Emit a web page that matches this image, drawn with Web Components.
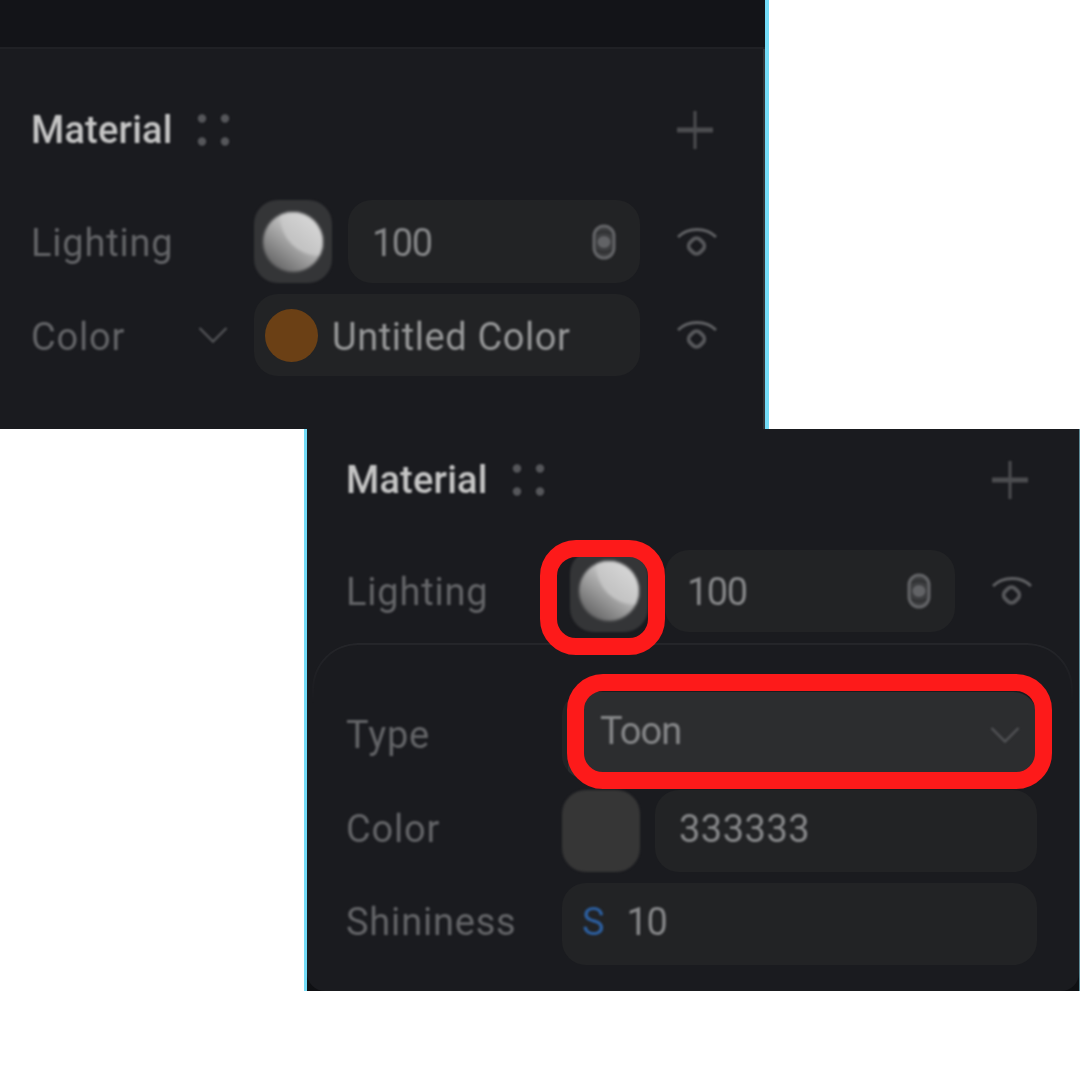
<!DOCTYPE html>
<html>
<head>
<meta charset="utf-8">
<title>Material panel</title>
<style>
   html, body { margin: 0; background: #fff; }
   body { width: 1080px; height: 1080px; overflow: hidden; font-family: Roboto, "Liberation Sans", sans-serif; }
   .first { --label-w: 222px; --control-w: 386px; --gap: 16px; --nudge: 3px; }
   .second { --label-w: 223px; --control-w: 385px; --gap: 17px; --nudge: 2px; --pad: 22px; }
   .sub { --label-w: 215px; --control-w: 475px; --gap: 15px; --nudge: 0px; --pad: 24px; }
   .swatch-flat { width: 78px; height: 82px; border-radius: 24px; background: #363636; flex: none; filter: blur(.8px); }
   .dot-color { display: block; width: 53px; height: 53px; border-radius: 50%; background: #6b4015; margin: 0 14px 0 -1px; filter: blur(.7px); }
</style>
</head>
<body>

<ui-panel class="first" side="right" band>
   <material-section>
      <prop-row label="Lighting" style="--field-h:83px">
         <sphere-swatch></sphere-swatch>
         <value-field grow value="100" style="--ls:-1.500px"><ui-icon slot="end" name="link"></ui-icon></value-field>
         <ui-icon slot="end" name="eye"></ui-icon>
      </prop-row>
      <prop-row label="Color" chevron>
         <value-field grow value="Untitled Color" bright style="--ls:.6px">
            <span slot="start" class="dot-color"></span>
         </value-field>
         <ui-icon slot="end" name="eye"></ui-icon>
      </prop-row>
   </material-section>
</ui-panel>

<ui-panel class="second" side="left" style="margin-left:304px">
   <material-section>
      <prop-row label="Lighting">
         <red-mark style="--t:-10px;--r:-17px;--b:-23px;--l:-30px"><sphere-swatch></sphere-swatch></red-mark>
         <value-field grow value="100" style="--ls:-1.500px"><ui-icon slot="end" name="link"></ui-icon></value-field>
         <ui-icon slot="end" name="eye"></ui-icon>
      </prop-row>
   </material-section>
   <sub-panel class="sub">
      <prop-row label="Type" style="--lift:2px">
         <red-mark grow style="--t:-18px;--r:-15px;--b:-10px;--l:5px">
            <value-field grow select value="Toon" style="--ls:-1px"><ui-icon slot="end" name="chevron"></ui-icon></value-field>
         </red-mark>
      </prop-row>
      <prop-row label="Color" style="--lift:4px">
         <div class="swatch-flat"></div>
         <value-field grow value="333333" style="--ls:.5px"></value-field>
      </prop-row>
      <prop-row label="Shininess" style="--lift:4px">
         <value-field grow value="10" prefix="S" style="--ls:-1.500px"></value-field>
      </prop-row>
   </sub-panel>
</ui-panel>

<script>
const ICONS = {
   dots: `<svg width="38" height="34" viewBox="0 0 38 34"><g fill="#56575b"><circle cx="7" cy="5.500" r="4.200"/><circle cx="30" cy="5.500" r="4.200"/><circle cx="7" cy="28.500" r="4.200"/><circle cx="30" cy="28.500" r="4.200"/></g></svg>`,
   plus: `<svg width="36" height="38" viewBox="0 0 36 38"><path d="M0 19H36" stroke="#4c4d50" stroke-width="5"/><path d="M18 0V38" stroke="#4c4d50" stroke-width="3"/></svg>`,
   eye: `<svg width="40" height="34" viewBox="0 0 40 34" fill="none"><path d="M1 11C11 1 29 1 39 11" stroke="#606164" stroke-width="3"/><rect x="12.500" y="13" width="14" height="14" rx="5" transform="rotate(45 19.500 20)" stroke="#58595c" stroke-width="3.800"/></svg>`,
   link: `<svg width="24" height="36" viewBox="0 0 24 36" fill="none"><rect x="2" y="2" width="20" height="32" rx="10" fill="#3c3d3f" stroke="#646568" stroke-width="3"/><ellipse cx="12" cy="18" rx="6.500" ry="6" fill="#626366"/><path d="M5 10C8 7 16 7 19 10M5 26C8 29 16 29 19 26" stroke="#2c2d2f" stroke-width="1.600"/></svg>`,
   chevron: `<svg width="30" height="18" viewBox="0 0 30 18" fill="none"><path d="M1.500 2L15 15.500L28.500 2" stroke="#525356" stroke-width="2.400"/></svg>`,
};

class UiIcon extends HTMLElement {
   constructor() {
      super();
      const name = this.getAttribute("name") || "plus";
      this.attachShadow({ mode: "open" }).innerHTML = `
         <style>
            :host { display: inline-flex; flex: none; filter: blur(.8px); }
            svg { display: block; }
         </style>${ICONS[name]}`;
   }
}

class UiPanel extends HTMLElement {
   constructor() {
      super();
      this.attachShadow({ mode: "open" }).innerHTML = `
         <style>
            :host { display: block; box-sizing: border-box; background: #0f1013; }
            :host([side="right"]) { width: 769px; height: 429px; border-right: 4px solid #74dcf7; }
            :host([side="left"]) { width: 776px; height: 562px; border-left: 3px solid #74dcf7; border-right: 1px solid #5b8a96; }
            .band { display: none; height: 47px; background: #131418; border-bottom: 2px solid #202125; }
            :host([band]) .band { display: block; }
            .body { background: #1a1b1f; box-sizing: border-box; height: 100%; }
            :host([band]) .body { height: calc(100% - 49px); border-right: 2px solid #33363a; padding: 61px 0 0 32px; }
            :host([side="left"]) .body { padding: 31px 0 0 40px; border-radius: 0 0 18px 18px; }
         </style>
         <div class="band"></div>
         <div class="body"><slot></slot></div>`;
   }
}

class MaterialSection extends HTMLElement {
   constructor() {
      super();
      this.attachShadow({ mode: "open" }).innerHTML = `
         <style>
            :host { display: block; }
            header { display: flex; align-items: center; height: 40px; margin-bottom: 50px; }
            h2 { margin: 0 0 0 -1px; width: 141px; font: 500 38px/40px Roboto, sans-serif; letter-spacing: .2px; color: #c6c6c6; filter: blur(.9px); white-space: nowrap; }
            .dots { margin-left: 23px; }
            .plus { margin-left: 444px; }
            .rows { display: grid; row-gap: 11px; }
         </style>
         <header>
            <h2>Material</h2>
            <ui-icon class="dots" name="dots"></ui-icon>
            <ui-icon class="plus" name="plus"></ui-icon>
         </header>
         <div class="rows"><slot></slot></div>`;
   }
}

class PropRow extends HTMLElement {
   constructor() {
      super();
      const chevron = this.hasAttribute("chevron") ? `<ui-icon name="chevron" style="margin-left:auto;margin-right:26px"></ui-icon>` : "";
      this.attachShadow({ mode: "open" }).innerHTML = `
         <style>
            :host { display: grid; grid-template-columns: var(--label-w) var(--control-w) auto; align-items: center; }
            .label { display: flex; align-items: center; font: 400 38px/1 Roboto, sans-serif; letter-spacing: .8px; color: #646568; }
            .label span { filter: blur(.9px); margin-left: -1px; padding-top: var(--nudge); padding-bottom: var(--lift, 0); }
            .control { display: flex; gap: var(--gap); align-items: stretch; }
            .end { margin-left: 37px; display: flex; padding-top: 2px; }
         </style>
         <div class="label"><span>${this.getAttribute("label")}</span>${chevron}</div>
         <div class="control"><slot></slot></div>
         <div class="end"><slot name="end"></slot></div>`;
   }
}

class ValueField extends HTMLElement {
   constructor() {
      super();
      const prefix = this.getAttribute("prefix");
      this.attachShadow({ mode: "open" }).innerHTML = `
         <style>
            :host { display: flex; align-items: center; box-sizing: border-box; height: var(--field-h, 82px); flex: none; min-width: 0;
               padding: 0 24px 0 var(--pad, 24px); border-radius: 24px; background: #222325; }
            :host([grow]) { flex: 1; }
            :host([bright]) { padding-left: 12px; }
            :host([select]) { height: 87px; padding: 0 17px 8px 38px;
               background: linear-gradient(to right, #222325 6px, #2c2d2f 6px); }
            .v { font: 400 38px/1 Roboto, sans-serif; letter-spacing: var(--ls, 0); color: #87888a; filter: blur(.9px);
               white-space: nowrap; padding-top: var(--nudge); padding-bottom: var(--lift, 0); }
            :host([bright]) .v { color: #98999a; }
            .p { font: 400 38px/1 Roboto, sans-serif; color: #2c5e9e; margin-right: 22px; margin-left: -4px; padding-bottom: var(--lift, 0); filter: blur(.8px); }
            .s { flex: 1; }
            ::slotted(ui-icon[name="chevron"]) { margin-top: 6px; }
         </style>
         <slot name="start"></slot>
         ${prefix ? `<span class="p">${prefix}</span>` : ""}
         <span class="v">${this.getAttribute("value")}</span>
         <span class="s"></span>
         <slot name="end"></slot>`;
   }
}

class SphereSwatch extends HTMLElement {
   constructor() {
      super();
      this.attachShadow({ mode: "open" }).innerHTML = `
         <style>
            :host { display: flex; flex: none; align-items: center; justify-content: center; width: 78px; height: var(--field-h, 82px);
               border-radius: 24px; background: #343537; filter: blur(.8px); }
            svg { display: block; filter: blur(.9px); }
         </style>
         <svg width="62" height="62" viewBox="0 0 62 62">
            <defs>
               <linearGradient id="body" x1="0.05" y1="0.95" x2="0.6" y2="0.25">
                  <stop offset="0" stop-color="#585859"/>
                  <stop offset="0.55" stop-color="#979797"/>
                  <stop offset="1" stop-color="#c8c8c8"/>
               </linearGradient>
               <linearGradient id="shine" x1="0.25" y1="0.85" x2="0.8" y2="0.2">
                  <stop offset="0" stop-color="#c4c4c4"/>
                  <stop offset="1" stop-color="#f0f0f0"/>
               </linearGradient>
               <clipPath id="ball"><circle cx="31" cy="31" r="30"/></clipPath>
            </defs>
            <circle cx="31" cy="31" r="30" fill="url(#body)"/>
            <g clip-path="url(#ball)"><circle cx="58" cy="5" r="40" fill="url(#shine)"/></g>
         </svg>`;
   }
}

class SubPanel extends HTMLElement {
   constructor() {
      super();
      this.attachShadow({ mode: "open" }).innerHTML = `
         <style>
            :host { display: grid; row-gap: 11px; box-sizing: border-box; margin: 11px 0 0 -35px; width: 761px;
               padding: 49px 36px 26px 35px; position: relative; }
            .edge { position: absolute; inset: 0 0 auto 0; height: 60px; border-radius: 46px 46px 0 0;
               border: 2px solid #25262a; border-bottom: none; box-sizing: border-box;
               -webkit-mask: linear-gradient(#000, transparent); mask: linear-gradient(#000, transparent); }
         </style>
         <div class="edge"></div>
         <slot></slot>`;
   }
}

// annotation ring drawn over the control it wraps
class RedMark extends HTMLElement {
   constructor() {
      super();
      this.attachShadow({ mode: "open" }).innerHTML = `
         <style>
            :host { display: flex; position: relative; flex: none; }
            :host([grow]) { flex: 1; }
            .ring { position: absolute; top: var(--t); right: var(--r); bottom: var(--b); left: var(--l);
               border: 17px solid #fd1a1a; border-radius: 36px; pointer-events: none; z-index: 2; }
         </style>
         <slot></slot>
         <div class="ring"></div>`;
   }
}

customElements.define("ui-icon", UiIcon);
customElements.define("ui-panel", UiPanel);
customElements.define("material-section", MaterialSection);
customElements.define("prop-row", PropRow);
customElements.define("value-field", ValueField);
customElements.define("sphere-swatch", SphereSwatch);
customElements.define("sub-panel", SubPanel);
customElements.define("red-mark", RedMark);
</script>
</body>
</html>
